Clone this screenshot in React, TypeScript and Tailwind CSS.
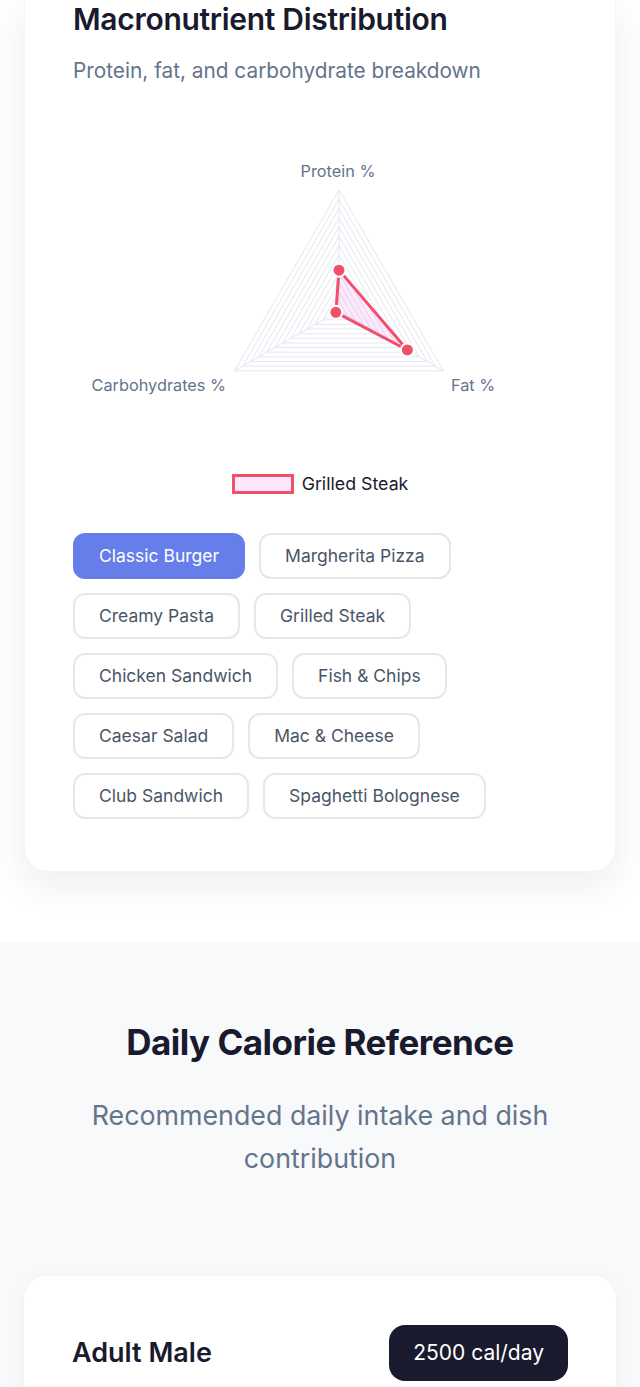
import React, { useState } from "react";

const dishes = [
  "Classic Burger",
  "Margherita Pizza",
  "Creamy Pasta",
  "Grilled Steak",
  "Chicken Sandwich",
  "Fish & Chips",
  "Caesar Salad",
  "Mac & Cheese",
  "Club Sandwich",
  "Spaghetti Bolognese",
];

// radar geometry, in svg coords
const CX = 266;
const CY = 200.5;
const R = 120.5;
const LEVELS = 13;
const ANGLES = [-90, 30, 150]; // protein, fat, carbs

const pt = (v: number, deg: number) => {
  const a = (deg * Math.PI) / 180;
  return [CX + v * R * Math.cos(a), CY + v * R * Math.sin(a)];
};

const poly = (vals: number[]) =>
  vals.map((v, i) => pt(v, ANGLES[i]).join(",")).join(" ");

const RadarChart = () => {
  const data = [0.335, 0.655, 0.03];
  return (
    <svg width="493" height="330" viewBox="0 0 493 330" className="block">
      {Array.from({ length: LEVELS }, (_, i) => (
        <polygon
          key={i}
          points={poly([(i + 1) / LEVELS, (i + 1) / LEVELS, (i + 1) / LEVELS])}
          fill="none"
          stroke="#e2e8f0"
          strokeWidth="1"
        />
      ))}
      {ANGLES.map((a) => {
        const [x, y] = pt(1, a);
        return (
          <line key={a} x1={CX} y1={CY} x2={x} y2={y} stroke="#e2e8f0" strokeWidth="1" />
        );
      })}
      <polygon
        points={poly(data)}
        fill="rgba(236,72,220,0.12)"
        stroke="#f1506b"
        strokeWidth="3"
        strokeLinejoin="round"
      />
      {data.map((v, i) => {
        const [x, y] = pt(v, ANGLES[i]);
        return <circle key={i} cx={x} cy={y} r="6.5" fill="#f1506b" stroke="#fff" strokeWidth="2" />;
      })}
      <g fontFamily="Inter, sans-serif" fontSize="16.3" fill="#64748b">
        <text x="265" y="67" textAnchor="middle">Protein %</text>
        <text x="153" y="281" textAnchor="end">Carbohydrates %</text>
        <text x="378" y="281" textAnchor="start">Fat %</text>
      </g>
    </svg>
  );
};

const App = () => {
  const [active, setActive] = useState("Classic Burger");

  return (
    <div className="min-h-screen bg-white font-['Inter',sans-serif] text-[#1a1a2e]">
      <section className="bg-white px-6 pb-[70px]">
        <div className="rounded-b-3xl border border-t-0 border-[#f1f5f9] bg-white px-12 pb-[52px] pt-[2px] shadow-[0_12px_40px_rgba(15,23,42,0.08)]">
          <h2 className="text-[30px] font-semibold leading-[34px] tracking-[-0.01em]">
            Macronutrient Distribution
          </h2>
          <p className="mt-[21px] text-[20.8px] leading-[28px] text-[#64748b]">
            Protein, fat, and carbohydrate breakdown
          </p>

          <div className="mt-[25px]">
            <RadarChart />
          </div>

          <div className="mt-[34px] flex items-center justify-center gap-2">
            <span className="h-[20px] w-[62px] border-[3px] border-[#f1506b] bg-[#fde8fb]" />
            <span className="text-[17.8px] leading-[20px] text-[#1a1a2e]">Grilled Steak</span>
          </div>

          <div className="mt-[39px] flex flex-wrap gap-[14px]">
            {dishes.map((d) => (
              <button
                key={d}
                onClick={() => setActive(d)}
                className={
                  d === active
                    ? "h-[46px] rounded-xl border-2 border-[#667eea] bg-[#667eea] px-6 text-[17.5px] text-white"
                    : "h-[46px] rounded-xl border-2 border-[#e2e8f0] bg-white px-6 text-[17.5px] text-[#4a5568]"
                }
              >
                {d}
              </button>
            ))}
          </div>
        </div>
      </section>

      <section className="bg-[#f8f9fb] px-6 pt-[78px]">
        <h2 className="text-center text-[35px] font-bold leading-[44px] tracking-[-0.015em]">
          Daily Calorie Reference
        </h2>
        <p className="mx-auto mt-[30px] max-w-[500px] text-center text-[26.8px] leading-[43px] text-[#64748b]">
          Recommended daily intake and dish contribution
        </p>

        <div className="mt-[96px] rounded-3xl bg-white px-12 pb-10 pt-[49px] shadow-[0_4px_20px_rgba(15,23,42,0.04)]">
          <div className="flex items-center justify-between">
            <h3 className="text-[27px] font-semibold leading-[34px]">Adult Male</h3>
            <span className="rounded-2xl bg-[#1a1a2e] px-6 py-[13px] text-[21px] leading-[30px] text-white">
              2500 cal/day
            </span>
          </div>
          <div className="h-[200px]" />
        </div>
      </section>
    </div>
  );
};

export default App;
